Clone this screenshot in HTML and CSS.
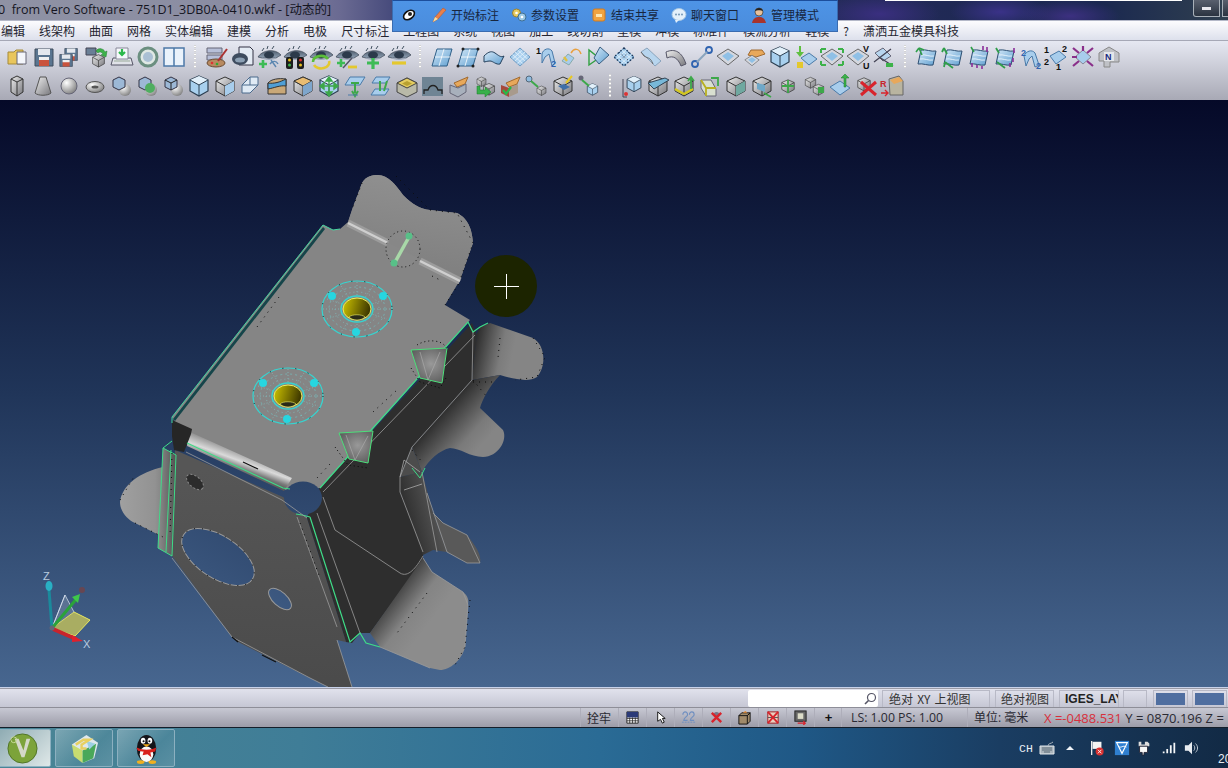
FILE: index.html
```html
<!DOCTYPE html>
<html lang="zh">
<head>
<meta charset="utf-8">
<title>Vero Software</title>
<link rel="stylesheet" href="styles.css">
</head>
<body>
<svg class="defs" width="0" height="0">
  <defs>
    <linearGradient id="gBlue" x1="0" y1="0" x2="1" y2="1"><stop offset="0" stop-color="#d4e8f8"/><stop offset="1" stop-color="#5f9fd0"/></linearGradient>
    <linearGradient id="gGrey" x1="0" y1="0" x2="1" y2="1"><stop offset="0" stop-color="#eeeeee"/><stop offset="1" stop-color="#77777c"/></linearGradient>
    <radialGradient id="gBall" cx=".35" cy=".3" r=".8"><stop offset="0" stop-color="#fff"/><stop offset="1" stop-color="#777"/></radialGradient>
    <linearGradient id="gEye" x1="0" y1="0" x2="0" y2="1"><stop offset="0" stop-color="#4f5d6e"/><stop offset="1" stop-color="#8fa0b4"/></linearGradient>
    <symbol id="folder" viewBox="0 0 26 26"><path d="M3 8h6l2-2h7v14H3z" fill="#e9c65c" stroke="#a58a3a"/><path d="M12 8h9v12h-9z" fill="#f4f6fb" stroke="#667"/></symbol>
    <symbol id="floppy" viewBox="0 0 26 26"><path d="M4 5h18v17H4z" fill="#5a7590" stroke="#3f4c5c"/><path d="M7 5h12v6H7z" fill="#e4e8ee"/><path d="M8 15h10v7H8z" fill="#c9533d"/><path d="M8 13h10v3H8z" fill="#f0f0f0"/></symbol>
    <symbol id="eye" viewBox="0 0 26 26"><path d="M2 13C6 6 19 4 25 11c-2 1-3 2-5 3H6z" fill="url(#gEye)" stroke="#3a4452" stroke-width=".7"/><path d="M6 7l2-3M11 5l1-3M16 5l2-3" stroke="#40505f"/><ellipse cx="13" cy="11" rx="5" ry="3.5" fill="#2c3a4b"/><path d="M6 14c4 2 10 2 14 0" stroke="#9caabc" fill="none"/></symbol>
    <symbol id="surf" viewBox="0 0 26 26"><path d="M8 5h15l-5 17H3z" fill="url(#gBlue)" stroke="#2f5f87"/><path d="M15 5l-5 17M6 13h15" stroke="#fff" stroke-width=".8"/></symbol>
    <symbol id="band" viewBox="0 0 26 26"><path d="M3 12C8 7 11 7 14 9s6 5 9 3l-4 8c-4 1-7-3-10-3s-5 1-6 1z" fill="url(#gBlue)" stroke="#24405c"/></symbol>
    <symbol id="mesh" viewBox="0 0 26 26"><path d="M13 4l10 9-10 9-10-9z" fill="#a9cfee" stroke="#6d9cc4"/><path d="M8 8l10 9M10.500 6l10 9M5.500 10.500l10 9M18 8l-10 9M15.500 6l-10 9M20.500 10.500l-10 9" stroke="#e6f2fb" stroke-width=".8"/></symbol>
    <symbol id="dia" viewBox="0 0 26 26"><path d="M13 5l11 7-11 9L2 12z" fill="#d4d7de" stroke="#666"/><path d="M13 8l6 4-6 5-6-5z" fill="#8fc0e6"/></symbol>
    <symbol id="cube" viewBox="0 0 26 26"><path d="M13 3l9 4v11l-9 5-9-5V7z" fill="#a8d0ee" stroke="#2b3e50" stroke-width="1.200"/><path d="M13 3l9 4-9 5-9-5z" fill="#e2f0fa"/><path d="M13 12v11M4 7l9 5 9-5" stroke="#2b3e50" fill="none"/></symbol>
    <symbol id="gcube" viewBox="0 0 26 26"><path d="M13 4l9 4v10l-9 5-9-5V8z" fill="url(#gGrey)" stroke="#333"/><path d="M4 8l9 5 9-5M13 13v10" stroke="#333" fill="none"/></symbol>
    <symbol id="book" viewBox="0 0 26 26"><path d="M7 6c5-1 10 2 15 1l-3 14c-5 1-10-2-15-1z" fill="url(#gBlue)" stroke="#2d4f72"/><path d="M7 11c4-1 9 2 13 1M6 15c4-1 9 2 13 1" stroke="#f4faff" stroke-width=".8" fill="none"/></symbol>
    <symbol id="ball" viewBox="0 0 26 26"><circle cx="17" cy="17" r="6" fill="url(#gBall)"/><path d="M5 7l6-3 6 3v7l-6 3-6-3z" fill="#9cb8d6" stroke="#334"/></symbol>
  </defs>
</svg>

<div class="app">
  <header class="titlebar">
    <span class="title">0&nbsp; from Vero Software - 751D1_3DB0A-0410.wkf - [动态的]</span>
    <span class="title-box"></span>
    <span class="winbtn"><i></i></span>
    <span class="winbtn winbtn-next"></span>
  </header>

  <nav class="menu">
    <span>编辑</span><span>线架构</span><span>曲面</span><span>网格</span><span>实体编辑</span><span>建模</span><span>分析</span><span>电极</span><span>尺寸标注</span><span>工程图</span><span>系统</span><span>视图</span><span>加工</span><span>线切割</span><span>型模</span><span>冲模</span><span>标准件</span><span>模流分析</span><span>鞋模</span><span>?</span><span>潇洒五金模具科技</span>
  </nav>

  <div class="share">
    <svg class="sh-ic first" viewBox="0 0 18 18"><ellipse cx="9" cy="9" rx="6" ry="4" transform="rotate(-35 9 9)" fill="#fff" stroke="#111" stroke-width="1.600"/><circle cx="10" cy="8" r="2" fill="#222"/></svg>
    <svg class="sh-ic" viewBox="0 0 18 18"><path d="M3 16l2-5 8-9 3 2-8 9z" fill="#e8804a" stroke="#b85a30" stroke-width=".6"/><path d="M3 16l2-5 3 2z" fill="#f5e0a0"/></svg><span>开始标注</span>
    <svg class="sh-ic" viewBox="0 0 18 18"><circle cx="6.500" cy="7" r="4" fill="#e8cc60" stroke="#998030"/><circle cx="12" cy="11" r="4" fill="#9cc8e4" stroke="#3f6f95"/><circle cx="6.500" cy="7" r="1.300" fill="#fff"/><circle cx="12" cy="11" r="1.300" fill="#fff"/></svg><span>参数设置</span>
    <svg class="sh-ic" viewBox="0 0 18 18"><rect x="3" y="3" width="12" height="12" rx="2" fill="#f0a340" stroke="#d07a20"/><path d="M6 8h6v3H6z" fill="#fde6b0"/></svg><span>结束共享</span>
    <svg class="sh-ic" viewBox="0 0 18 18"><ellipse cx="9" cy="8.500" rx="7" ry="6" fill="#e4f0fa" stroke="#a8c8e4"/><path d="M5 14l1 3 3-3z" fill="#e4f0fa"/><circle cx="6" cy="8.500" r=".9" fill="#6a8fb0"/><circle cx="9" cy="8.500" r=".9" fill="#6a8fb0"/><circle cx="12" cy="8.500" r=".9" fill="#6a8fb0"/></svg><span>聊天窗口</span>
    <svg class="sh-ic" viewBox="0 0 18 18"><circle cx="9" cy="6" r="4" fill="#e8c09a" stroke="#222" stroke-width=".6"/><path d="M5 5c1-4 7-4 8 0-2-1-6-1-8 0z" fill="#222"/><path d="M2 17c1-5 4-6 7-6s6 1 7 6z" fill="#a8342c"/></svg><span>管理模式</span>
  </div>

  <div class="toolbars">
    <div class="tbrow row-a">
      <svg class="ic"><use href="#folder"/></svg>
      <svg class="ic"><use href="#floppy"/></svg>
      <svg class="ic" viewBox="0 0 26 26"><g transform="translate(5 1) scale(.7)"><use href="#floppy" width="26" height="26"/></g><g transform="translate(0 7) scale(.7)"><use href="#floppy" width="26" height="26"/></g></svg>
      <svg class="ic" viewBox="0 0 26 26"><path d="M3 4h10v7H3z" fill="#6a7f96" stroke="#445"/><use href="#gcube" x="7" y="8" width="17" height="17"/><path d="M13 7a5 5 0 0 1 9 1l2-1-1 6-5-2 2-1a3 3 0 0 0-5-1z" fill="#3db24a" stroke="#1f7a2c" stroke-width=".5"/></svg>
      <svg class="ic" viewBox="0 0 26 26"><path d="M4 14h18l2 7H2z" fill="#e0e2e8" stroke="#556"/><path d="M7 4h12v11H7z" fill="#f6f8fc" stroke="#889"/><path d="M13 5v6M10 8l3 3 3-3" stroke="#2cb84c" stroke-width="2.200" fill="none"/><path d="M5 17h16" stroke="#9a9"/></svg>
      <svg class="ic" viewBox="0 0 26 26"><circle cx="13" cy="13" r="9" fill="#dfe8e4" stroke="#6b8f80" stroke-width="3"/><circle cx="13" cy="13" r="5" fill="#aac0d4"/></svg>
      <svg class="ic" viewBox="0 0 26 26"><rect x="3" y="4" width="20" height="18" fill="#eaf2fb" stroke="#4d78a8" stroke-width="1.500"/><path d="M13 4v18" stroke="#4d78a8" stroke-width="1.500"/></svg>
      <i class="sep"></i>
      <svg class="ic" viewBox="0 0 26 26"><path d="M3 4h15v5H3zM3 11h15v5H3z" fill="#b7bfd8" stroke="#667"/><ellipse cx="12" cy="19" rx="9" ry="4" fill="#b88a60" stroke="#6a4a30"/><circle cx="8" cy="19" r="1.300" fill="#d33"/><circle cx="13" cy="20" r="1.300" fill="#3a3"/><path d="M14 17l9-12" stroke="#a33" stroke-width="2"/></svg>
      <svg class="ic" viewBox="0 0 26 26"><path d="M9 3h11l3 3v15H9z" fill="#e4ebf4" stroke="#334"/><ellipse cx="10" cy="15" rx="8" ry="6" fill="#3e4c5f"/><ellipse cx="10" cy="16" rx="5" ry="2.500" fill="#8ca0b4"/></svg>
      <svg class="ic" viewBox="0 0 26 26"><use href="#eye"/><path d="M3 20h8M7 16v8" stroke="#3dbb55" stroke-width="2.600"/><path d="M15 16l5 7M14 20c2-3 6-4 8 0" stroke="#5a86b0" stroke-width="1.400" fill="none"/></svg>
      <svg class="ic" viewBox="0 0 26 26"><use href="#eye"/><rect x="4" y="13" width="7" height="12" rx="2" fill="#1c1c1c"/><rect x="15" y="13" width="7" height="12" rx="2" fill="#1c1c1c"/><circle cx="7.500" cy="16" r="1.500" fill="#e8c020"/><circle cx="7.500" cy="21" r="1.500" fill="#3db24a"/><circle cx="18.500" cy="16" r="1.500" fill="#d83030"/><circle cx="18.500" cy="21" r="1.500" fill="#e8c020"/></svg>
      <svg class="ic" viewBox="0 0 26 26"><use href="#eye"/><path d="M5 18a8 6 0 0 1 15-3" stroke="#5bbd3a" stroke-width="2.600" fill="none"/><path d="M21 17a8 6 0 0 1-15 4" stroke="#e4c82e" stroke-width="2.600" fill="none"/></svg>
      <svg class="ic" viewBox="0 0 26 26"><use href="#eye"/><path d="M3 19h8M7 15v8" stroke="#3dbb55" stroke-width="2.600"/><path d="M9 24l9-10" stroke="#556" stroke-width="1.500"/><path d="M14 23h9" stroke="#e4c82e" stroke-width="2.800"/></svg>
      <svg class="ic" viewBox="0 0 26 26"><use href="#eye"/><path d="M7 19h12M13 14v11" stroke="#3dbb55" stroke-width="3.200"/></svg>
      <svg class="ic" viewBox="0 0 26 26"><use href="#eye"/><path d="M6 19h14" stroke="#e4c82e" stroke-width="3.200"/></svg>
      <i class="sep"></i>
      <svg class="ic"><use href="#surf"/></svg>
      <svg class="ic" viewBox="0 0 26 26"><use href="#surf"/><circle cx="8" cy="5" r="1.500" fill="#222"/><circle cx="23" cy="5" r="1.500" fill="#222"/><circle cx="3" cy="22" r="1.500" fill="#222"/><circle cx="18" cy="22" r="1.500" fill="#222"/></svg>
      <svg class="ic"><use href="#band"/></svg>
      <svg class="ic"><use href="#mesh"/></svg>
      <svg class="ic" viewBox="0 0 26 26"><path d="M9 10c1-5 7-7 10-3l3 12-3 3-3-12-4 3-3 6z" fill="#a8cdec" stroke="#4a7aa8"/><text class="ictxt" x="3" y="10">1</text><text class="ictxt blue" x="18" y="23">2</text></svg>
      <svg class="ic" viewBox="0 0 26 26"><path d="M3 17l6-7 6 4-5 7z" fill="#a8cdec" stroke="#8aa"/><path d="M12 9c3-5 8-5 10 1" stroke="#e8a040" stroke-width="1.500" fill="none"/><path d="M5 13l3 4" stroke="#e0c040" stroke-width="2.400"/></svg>
      <svg class="ic" viewBox="0 0 26 26"><path d="M4 6v15l10-7z" fill="none" stroke="#30a040" stroke-width="1.400"/><path d="M15 3l9 8-10 9-5-6z" fill="url(#gBlue)" stroke="#3a5f82"/></svg>
      <svg class="ic" viewBox="0 0 26 26"><use href="#mesh"/><path d="M13 4l10 9-10 9-10-9z" fill="none" stroke="#1f3a5c" stroke-dasharray="1.500 2" stroke-width="1.400"/><path d="M8 8l10 9M18 8l-10 9" stroke="#1f3a5c" stroke-dasharray="1.500 2"/></svg>
      <svg class="ic" viewBox="0 0 26 26"><path d="M4 8l6-4 14 13-6 5z" fill="#b7d5ee" stroke="#8aa4bd"/><path d="M4 8l3 4c5 3 6 1 9 8" stroke="#666" fill="none"/></svg>
      <svg class="ic" viewBox="0 0 26 26"><path d="M3 8c9-4 16 0 20 12l-5 2C15 14 10 11 4 14z" fill="url(#gGrey)" stroke="#556"/></svg>
      <svg class="ic" viewBox="0 0 26 26"><circle cx="6" cy="20" r="3" fill="none" stroke="#2f63b0" stroke-width="1.800"/><circle cx="20" cy="6" r="3" fill="none" stroke="#2f63b0" stroke-width="1.800"/><path d="M8 18L18 8" stroke="#8aa4bd" stroke-width="2"/></svg>
      <svg class="ic"><use href="#dia"/></svg>
      <svg class="ic" viewBox="0 0 26 26"><path d="M10 6h11l3 4-9 3-8-2z" fill="#e8a85a" stroke="#a06a30"/><use href="#dia" x="1" y="8" width="20" height="17"/></svg>
      <svg class="ic"><use href="#cube"/></svg>
      <svg class="ic" viewBox="0 0 26 26"><path d="M8 14l8-5 8 6-8 6z" fill="#a8cdec" stroke="#4a7aa8"/><path d="M6 2v6H3l4 5 4-5H8V2z" fill="#5fbf40"/><path d="M4 18h6v6H4z" fill="#e4c82e"/></svg>
      <svg class="ic" viewBox="0 0 26 26"><use href="#dia"/><path d="M2 5h5M2 5v4M24 5h-5M24 5v4M2 21h5M2 21v-4M24 21h-5M24 21v-4" stroke="#3db24a" stroke-width="2"/></svg>
      <svg class="ic" viewBox="0 0 26 26"><use href="#dia"/><text class="ictxt" x="18" y="8">V</text><text class="ictxt" x="18" y="25">U</text></svg>
      <svg class="ic" viewBox="0 0 26 26"><path d="M4 9l8-5 8 8-8 5z" fill="#b7d5ee" stroke="#667"/><path d="M3 18L20 5M8 13l14 9" stroke="#445" stroke-width="1.300"/><path d="M15 19h7v4h-7z" fill="#3db24a"/></svg>
      <i class="sep"></i>
      <svg class="ic" viewBox="0 0 26 26"><use href="#book"/><path d="M8 11L5 4M5 4L2 8M5 4l5 2" stroke="#2f9e4a" stroke-width="1.600" fill="none"/></svg>
      <svg class="ic" viewBox="0 0 26 26"><use href="#book"/><path d="M7 10L4 4M4 4L2 8M5 18l8 6M5 18l-1 5" stroke="#2f9e4a" stroke-width="1.800" fill="none"/></svg>
      <svg class="ic" viewBox="0 0 26 26"><use href="#book"/><path d="M8 8L5 3" stroke="#2f9e4a" stroke-width="1.600"/><path d="M6 19v4M11 21v3M16 22v3M21 8V3M17 6V2" stroke="#8a2f9a" stroke-width="1.600"/></svg>
      <svg class="ic" viewBox="0 0 26 26"><use href="#book"/><path d="M7 9L4 4M5 18l8 6" stroke="#2f9e4a" stroke-width="1.800"/><path d="M22 4v5M21 14v4M18 19v4" stroke="#8a2f9a" stroke-width="1.600"/></svg>
      <svg class="ic" viewBox="0 0 26 26"><path d="M6 12c2-5 8-7 11-3l4 12-4 2-3-11-3 3-3 7z" fill="#a8cdec" stroke="#4a7aa8"/><text class="ictxt blue" x="3" y="12">2</text><text class="ictxt blue" x="18" y="25">2</text></svg>
      <svg class="ic" viewBox="0 0 26 26"><path d="M6 12l9-5 7 6-10 7z" fill="#a8cdec" stroke="#4a7aa8"/><text class="ictxt" x="0" y="9">1</text><text class="ictxt" x="18" y="8">2</text><text class="ictxt" x="0" y="21">2</text><text class="ictxt" x="12" y="26">1</text></svg>
      <svg class="ic" viewBox="0 0 26 26"><path d="M13 6l8 7-8 7-8-7z" fill="#a8cdec" stroke="#889"/><path d="M3 4l6 5M23 4l-6 5M3 22l6-5M23 22l-6-5M13 2v5M2 13h5" stroke="#8a2f8a" stroke-width="2.200"/></svg>
      <svg class="ic" viewBox="0 0 26 26"><path d="M3 9l10-6 10 6v9H14v5H8v-6H3z" fill="#bfc1c6" stroke="#888"/><path d="M8 8h10v9H8z" fill="#e4e6ea"/><text class="ictxt navy" x="9" y="16">N</text></svg>
    </div>
    <div class="tbrow row-b">
      <svg class="ic" viewBox="0 0 26 26"><path d="M7 6l6-3 6 3v13l-6 4-6-4z" fill="url(#gGrey)" stroke="#333"/><path d="M7 6l6 3 6-3M13 9v14" stroke="#333" fill="none"/></svg>
      <svg class="ic" viewBox="0 0 26 26"><path d="M10 4h6l5 16c-3 3-13 3-16 0z" fill="url(#gGrey)" stroke="#555"/></svg>
      <svg class="ic" viewBox="0 0 26 26"><circle cx="13" cy="13" r="8" fill="url(#gBall)" stroke="#667"/></svg>
      <svg class="ic" viewBox="0 0 26 26"><ellipse cx="13" cy="14" rx="9" ry="5.500" fill="url(#gBall)" stroke="#555"/><ellipse cx="13" cy="14" rx="3.500" ry="1.500" fill="#555"/></svg>
      <svg class="ic"><use href="#ball"/></svg>
      <svg class="ic" viewBox="0 0 26 26"><use href="#ball"/><circle cx="16" cy="15" r="5" fill="#4fae60"/></svg>
      <svg class="ic" viewBox="0 0 26 26"><use href="#ball"/><path d="M5 7l6 3 6-3M11 10v7" stroke="#222" fill="none"/></svg>
      <svg class="ic"><use href="#cube"/></svg>
      <svg class="ic" viewBox="0 0 26 26"><use href="#gcube"/><path d="M13 13l9-5v10l-9 5z" fill="#a8cdec"/></svg>
      <svg class="ic" viewBox="0 0 26 26"><path d="M4 20V12l8-8h8v8l-8 8z" fill="#dfeaf5" stroke="#4a6a8c"/><path d="M12 4v8l8 0M4 12h8" stroke="#4a6a8c" fill="none"/></svg>
      <svg class="ic" viewBox="0 0 26 26"><path d="M4 10c3-4 11-5 18-4v15H4z" fill="#c9a878" stroke="#333"/><path d="M4 10c6 1 12-1 18-4v7c-6-1-12 2-18 3z" fill="#4f9fd6" stroke="#333"/></svg>
      <svg class="ic" viewBox="0 0 26 26"><use href="#gcube"/><path d="M4 8l9-4 9 4-9 5z" fill="#e8bc72" stroke="#333"/><path d="M13 13v10l9-5V8z" fill="#7ea6cc"/></svg>
      <svg class="ic" viewBox="0 0 26 26"><use href="#cube"/><path d="M13 6v15M6 13h14M13 4l-3 4h6zM13 23l-3-4h6zM4 13l4-3v6zM22 13l-4-3v6z" stroke="#3da84a" fill="#3da84a" stroke-width="1.400"/></svg>
      <svg class="ic" viewBox="0 0 26 26"><path d="M8 4h15l-5 8H3z" fill="#a8cdec" stroke="#4a7aa8"/><path d="M13 10v10M10 18l3 5 3-5M9 10h8" stroke="#3da84a" stroke-width="2" fill="none"/><path d="M6 22h10" stroke="#4a7aa8"/></svg>
      <svg class="ic" viewBox="0 0 26 26"><path d="M8 4h14l-4 6H4zM7 16h14l-4 6H3z" fill="#a8cdec" stroke="#4a7aa8"/><path d="M12 8v10M19 8l-3 10" stroke="#3da84a" stroke-width="2"/></svg>
      <svg class="ic" viewBox="0 0 26 26"><path d="M13 5l10 5v9l-10 5-10-5v-9z" fill="#b9b9a8" stroke="#444"/><path d="M13 5l10 5-10 5-10-5z" fill="#e4cc60" stroke="#444"/><path d="M13 8l5 2.500-5 2.500-5-2.500z" fill="#b8a030"/></svg>
      <svg class="ic" viewBox="0 0 26 26"><rect x="2" y="4" width="21" height="19" fill="#6f8494"/><path d="M4 21v-4h4c2-6 8-6 10 0h4v4" stroke="#222" fill="none" stroke-width="1.300"/></svg>
      <svg class="ic" viewBox="0 0 26 26"><path d="M8 10l14-6-3 7-8 3z" fill="#e8a85a" stroke="#a06a30"/><path d="M4 12l8 3 8-4v8l-8 5-8-4z" fill="#a8b0bc" stroke="#667"/></svg>
      <svg class="ic" viewBox="0 0 26 26"><use href="#gcube" x="9" y="8" width="16" height="16"/><use href="#gcube" x="3" y="2" width="13" height="13"/><path d="M5 13v8h8v3l6-5-6-5v3H8v-4z" fill="#38b04a" stroke="#1d7a2c" stroke-width=".5"/></svg>
      <svg class="ic" viewBox="0 0 26 26"><path d="M3 12l8 3v9l-8-4z" fill="#a8483c"/><path d="M11 15l9-4v9l-9 4z" fill="#a89a8c"/><path d="M8 10l14-6-3 7-8 3z" fill="#e8a85a" stroke="#a06a30"/><path d="M5 17l3 4 5-7" stroke="#28b848" stroke-width="2.200" fill="none"/></svg>
      <svg class="ic" viewBox="0 0 26 26"><use href="#gcube" x="11" y="11" width="13" height="13"/><circle cx="5" cy="6" r="3" fill="#8fbce0" stroke="#567"/><path d="M7 8l7 6" stroke="#3da84a" stroke-width="2"/></svg>
      <svg class="ic" viewBox="0 0 26 26"><use href="#gcube"/><path d="M8 13l6-2 6 3-6 3z" fill="#3f6fa8"/><path d="M16 10l6-7" stroke="#e8c820" stroke-width="2"/></svg>
      <svg class="ic" viewBox="0 0 26 26"><use href="#cube" x="9" y="9" width="15" height="15"/><circle cx="5" cy="5" r="2.500" fill="#667"/><path d="M6 7l7 6" stroke="#3da84a" stroke-width="2"/></svg>
      <i class="sep"></i>
      <svg class="ic" viewBox="0 0 26 26"><use href="#cube" x="5" y="1" width="20" height="20"/><path d="M4 6v18h4" stroke="#445" fill="none"/><circle cx="7" cy="21" r="2" fill="#d33"/></svg>
      <svg class="ic" viewBox="0 0 26 26"><use href="#gcube"/><path d="M3 10l17-5 4 2-15 9z" fill="#78b8d8" stroke="#345"/></svg>
      <svg class="ic" viewBox="0 0 26 26"><use href="#gcube"/><path d="M4 16l9 5 9-5" stroke="#d4c820" stroke-width="2.400" fill="none"/><path d="M20 16V5M17 8l3-4 3 4" stroke="#3da84a" stroke-width="1.800" fill="none"/></svg>
      <svg class="ic" viewBox="0 0 26 26"><path d="M4 7h10l5 9v7H9l-5-8z" fill="#d8dfd0" stroke="#667"/><path d="M4 7l5 8h10M9 15v8" stroke="#b8b020" stroke-width="1.800" fill="none"/><path d="M14 5h7v8" stroke="#3da84a" stroke-width="1.800" fill="none"/></svg>
      <svg class="ic" viewBox="0 0 26 26"><use href="#gcube"/><path d="M13 13l9-5v10l-9 5z" fill="#6fa8a0"/></svg>
      <svg class="ic" viewBox="0 0 26 26"><use href="#gcube"/><path d="M8 10l8 2v7l-8-3z" fill="#6fa8c8"/><path d="M15 20l7 4" stroke="#3da84a" stroke-width="1.800"/></svg>
      <svg class="ic" viewBox="0 0 26 26"><use href="#gcube" x="4" y="4" width="18" height="18"/><path d="M13 7v13M7 13h12" stroke="#3da84a" stroke-width="1.800"/></svg>
      <svg class="ic" viewBox="0 0 26 26"><use href="#gcube" x="2" y="2" width="15" height="15"/><use href="#gcube" x="10" y="9" width="15" height="15"/><path d="M17 14h6v6h-6z" fill="#3da84a"/></svg>
      <svg class="ic" viewBox="0 0 26 26"><path d="M3 14l10-6 10 7-10 7z" fill="#a8cdec" stroke="#4a7aa8"/><path d="M17 14V5h-3l4-4 4 4h-3v9z" fill="#3db24a" stroke="#1d7a2c" stroke-width=".5"/></svg>
      <svg class="ic" viewBox="0 0 26 26"><use href="#gcube" x="1" y="2" width="20" height="18"/><path d="M8 9l15 13M23 9L8 22" stroke="#d8242c" stroke-width="3"/></svg>
      <svg class="ic" viewBox="0 0 26 26"><path d="M10 6l10-3 4 5v14H11z" fill="#b9b4a0" stroke="#666"/><path d="M11 7l9-3 4 4-9 3z" fill="#e8a85a"/><text class="ictxt red" x="1" y="14">R</text><path d="M2 20h7M6 17l3 3-3 3" stroke="#d8242c" stroke-width="1.400" fill="none"/></svg>
    </div>
  </div>

  <main class="viewport">
    <svg class="scene" viewBox="0 100 1228 587" preserveAspectRatio="none">
      <defs>
        <linearGradient id="bg" gradientUnits="userSpaceOnUse" x1="0" y1="100" x2="0" y2="687"><stop offset="0" stop-color="#050928"/><stop offset=".5" stop-color="#203559"/><stop offset="1" stop-color="#47668f"/></linearGradient>
        <linearGradient id="lTab" gradientUnits="userSpaceOnUse" x1="120" y1="500" x2="170" y2="500"><stop offset="0" stop-color="#a0a0a0"/><stop offset=".7" stop-color="#929292"/><stop offset="1" stop-color="#777"/></linearGradient>
        <linearGradient id="lStrip" gradientUnits="userSpaceOnUse" x1="160" y1="500" x2="175" y2="500"><stop offset="0" stop-color="#868686"/><stop offset="1" stop-color="#555"/></linearGradient>
        <linearGradient id="upTab" gradientUnits="userSpaceOnUse" x1="474" y1="350" x2="512" y2="358"><stop offset="0" stop-color="#2e2e2e"/><stop offset=".7" stop-color="#7c7c7c"/><stop offset="1" stop-color="#858585"/></linearGradient>
        <linearGradient id="upTab2" gradientUnits="userSpaceOnUse" x1="442" y1="413" x2="480" y2="447"><stop offset="0" stop-color="#2e2e2e"/><stop offset=".7" stop-color="#7a7a7a"/><stop offset="1" stop-color="#858585"/></linearGradient>
        <linearGradient id="botTab" gradientUnits="userSpaceOnUse" x1="388" y1="590" x2="430" y2="622"><stop offset="0" stop-color="#2e2e2e"/><stop offset=".6" stop-color="#848484"/><stop offset="1" stop-color="#8c8c8c"/></linearGradient>
        <linearGradient id="strip" gradientUnits="userSpaceOnUse" x1="402" y1="505" x2="440" y2="495"><stop offset="0" stop-color="#2e2e2e"/><stop offset="1" stop-color="#5c5c5c"/></linearGradient>
        <linearGradient id="bend" gradientUnits="userSpaceOnUse" x1="244" y1="450" x2="236" y2="472"><stop offset="0" stop-color="#858585"/><stop offset=".5" stop-color="#dadada"/><stop offset=".8" stop-color="#7a7a7a"/><stop offset="1" stop-color="#5a5a5a"/></linearGradient>
        <linearGradient id="topTab" gradientUnits="userSpaceOnUse" x1="410" y1="180" x2="395" y2="270"><stop offset="0" stop-color="#8f8f8f"/><stop offset="1" stop-color="#7f7f7f"/></linearGradient>
        <linearGradient id="front" gradientUnits="userSpaceOnUse" x1="240" y1="470" x2="240" y2="680"><stop offset="0" stop-color="#565656"/><stop offset="1" stop-color="#4b4b4b"/></linearGradient>
        <linearGradient id="yel" x1="0" y1="0" x2="1" y2=".2"><stop offset="0" stop-color="#cfc400"/><stop offset="1" stop-color="#403a00"/></linearGradient>
        <radialGradient id="dim" cx=".55" cy=".45" r=".6"><stop offset="0" stop-color="#999"/><stop offset="1" stop-color="#5f5f5f"/></radialGradient>
        <g id="flange">
          <ellipse rx="35" ry="28" fill="#858585" stroke="#37d4d0" stroke-width="1.200"/>
          <ellipse rx="35" ry="28" fill="none" stroke="#111" stroke-dasharray="1 12"/>
          <ellipse rx="28" ry="22" fill="none" stroke="#6ad6d6" stroke-width=".5" stroke-dasharray="2 3"/>
          <ellipse rx="22" ry="17" fill="none" stroke="#7fdcdc" stroke-width=".5" stroke-dasharray="1 3"/>
          <path d="M-30-10L30 10M-30 10L30-10M0-27V27M-16-23L16 23M16-23L-16 23M-34 0H34" stroke="#7fdcdc" stroke-width=".5" stroke-dasharray="1 2"/>
          <ellipse rx="16" ry="13" fill="#858585" stroke="#37d4d0" stroke-width="1.400"/>
          <ellipse rx="14" ry="11" fill="url(#yel)" stroke="#e8f060"/>
          <path d="M-8 8c3-3 13-3 16 0-4 4-12 4-16 0z" fill="#2a2a18" stroke="#f0f070" stroke-width=".6"/>
          <circle cx="-25" cy="-13" r="4" fill="#26d6e0"/>
          <circle cx="26" cy="-13" r="4" fill="#26d6e0"/>
          <circle cx="-1" cy="23" r="4" fill="#26d6e0"/>
        </g>
      </defs>
      <rect x="0" y="100" width="1228" height="587" fill="url(#bg)"/>

      <!-- left tab and strip -->
      <path d="M163 467C140 472 122 485 120 502C120 512 128 520 135 523L163 537Z" fill="url(#lTab)"/>
      <path d="M163 448L176 455L172 556L158 548Z" fill="url(#lStrip)"/>

      <!-- front face -->
      <path d="M175 450L283 497L307 518L346 642L337 640L352 687L328 687L238 642L232 637L172 556Z" fill="url(#front)"/>
      <ellipse cx="218" cy="557" rx="41" ry="21" transform="rotate(33 218 557)" fill="url(#bg)" stroke="#9a9a9a"/>
      <ellipse cx="218" cy="557" rx="41" ry="21" transform="rotate(33 218 557)" fill="none" stroke="#111" stroke-dasharray="1 7"/>
      <ellipse cx="280" cy="599" rx="14" ry="7" transform="rotate(42 280 599)" fill="url(#bg)" stroke="#999"/>
      <ellipse cx="195" cy="482" rx="10" ry="5.500" transform="rotate(40 195 482)" fill="#2c2c2c" stroke="#888" stroke-dasharray="2 2"/>

      <!-- dark side -->
      <path d="M316 492L472 323L477 335L472 380L412 447L400 477L400 492L423 552L423 560L370 633L360 633L352 643L346 642L307 518Z" fill="#2e2e2e"/>

      <!-- right tabs -->
      <path d="M477 333L480 327L490 323L533 338C545 345 547 365 537 377C530 382 515 380 500 375L472 380Z" fill="url(#upTab)"/>
      <path d="M472 380L500 375C490 385 482 400 480 408L503 430C508 440 498 457 483 457C470 457 460 448 450 448C440 450 428 460 422 472L412 447Z" fill="url(#upTab2)"/>
      <path d="M412 447L422 472L400 477Z" fill="#4c4c4c"/>
      <path d="M400 477L422 472L433 513L447 552L433 550L423 555L400 492Z" fill="url(#strip)"/>
      <path d="M433 513L443 523L467 535C475 545 482 555 480 563L467 563L447 552Z" fill="#595959"/>
      <path d="M423 558L432 572L463 592C468 596 469 600 468 605L465 647C462 660 450 670 440 670L430 668L380 647L370 633Z" fill="url(#botTab)"/>

      <!-- top face with tab -->
      <path d="M323 225L333 230L340 229L348 222L353 207L362 183C366 176 372 175 378 175C388 175 396 185 403 195C412 204 420 209 430 210L457 213C465 217 472 225 473 243L460 280L445 305L470 320L345 460L320 488L283 490L187 445L172 417Z" fill="#858585"/>
      <path d="M348 222L353 207L362 183C366 176 372 175 378 175C388 175 396 185 403 195C412 204 420 209 430 210L457 213C465 217 472 225 473 243L460 280Z" fill="url(#topTab)"/>
      <path d="M190 432L292 478L284 491L187 446Z" fill="url(#bend)"/>
      <path d="M348 223L388 243M420 261L460 281" stroke="#9c9c9c" stroke-width="7"/>
      <path d="M348 223L388 243M420 261L460 281" stroke="#cfcfcf" stroke-width="2.500"/>

      <!-- hole in bend -->
      <ellipse cx="303" cy="498" rx="19" ry="16.500" fill="url(#bg)"/>

      <!-- black corner -->
      <path d="M172 420L192 429L191 434L184 452L174 450L172 436Z" fill="#262626"/>

      <!-- edges -->
      <path d="M323 227L173 419L175 421L325 229Z" fill="#15454a"/>
      <path d="M323 225L172 417L172 423M323 225L333 230L340 229" stroke="#45d6a0" fill="none"/>
      <path d="M163 448L172 441M163 448L176 455L172 556L158 548L163 448M171 450L166 552" stroke="#3fdc88" fill="none"/>
      <path d="M187 443L283 488L290 489" stroke="#3fdc88" fill="none" stroke-width="1.200"/>
      <path d="M320 488L345 460L373 428L468 322L473 332L480 327L488 323M310 517L350 642L360 633L366 643L380 647M310 517L302 515L296 514" stroke="#3fdc88" fill="none" stroke-width="1.200"/>
      <path d="M323 497L335 530L400 573C408 578 416 568 423 556M317 513L360 633M473 332L472 380L412 447L400 477L400 492L423 552M422 472L437 552M323 492L475 335M186 452L282 500L307 518M172 558L232 637L310 678L328 687M337 640L352 687M427 493L447 552L467 563L480 563M433 513L443 523L467 535L480 563M423 558L432 572L463 592L468 605L465 647M430 668L380 647M297 517L337 627" stroke="#9c9c9c" fill="none" stroke-width=".8"/>
      <path d="M420 472L404 460L400 477M404 490L422 484" stroke="#b8b8b8" stroke-width=".7" fill="none"/>
      <path d="M412 468L420 478L425 468" stroke="#3fdc88" fill="none"/>

      <!-- dotted sharp edges -->
      <path d="M257 327L279 297M396 176L430 210L457 213L473 243L460 280M362 183L353 207M373 412L397 390M432 276L442 281M533 338L545 357L537 377L515 380M500 338L498 358M473 380L487 397M473 382L492 382M317 478L330 464M300 523L320 578M427 593L397 633M470 600L465 647L455 665M412 450L423 463M445 305L460 282M172 453L170 537M135 523L163 537M120 500L135 475" stroke="#0a0a0a" fill="none" stroke-dasharray="1 5"/>
      <path d="M243 462L258 469M262 655L276 662M232 637L238 642" stroke="#111" stroke-width="1.200"/>
      <ellipse cx="403" cy="249" rx="17" ry="18" fill="#8a8a8a" opacity=".55"/>
      <ellipse cx="403" cy="249" rx="17" ry="18" fill="none" stroke="#111" stroke-dasharray="1 3"/>
      <path d="M394 264L409 237" stroke="#a8d8a8" stroke-width="3.500"/>
      <circle cx="409" cy="236" r="3.500" fill="#58c088"/>
      <circle cx="394" cy="263" r="3.500" fill="#58c088"/>

      <!-- flanges -->
      <use href="#flange" x="357" y="309"/>
      <use href="#flange" x="288" y="396"/>

      <!-- dimples -->
      <path d="M411 350L447 348L442 383L420 378Z" fill="url(#dim)" stroke="#4ce07a"/>
      <path d="M420 352L428 380L440 352" stroke="#b0b0b0" stroke-width=".6" fill="none"/>
      <path d="M417 345C428 338 445 340 447 350M411 368L420 382L440 388L446 378" stroke="#0a0a0a" stroke-dasharray="1 3" fill="none"/>
      <path d="M339 433L373 431L368 463L349 459Z" fill="url(#dim)" stroke="#4ce07a"/>
      <path d="M346 435L355 460L368 436" stroke="#b0b0b0" stroke-width=".6" fill="none"/>
      <path d="M335 447L348 465L368 468" stroke="#0a0a0a" stroke-dasharray="1 3" fill="none"/>

      <!-- cursor -->
      <circle cx="506" cy="286" r="31" fill="#1c2400"/>
      <path d="M494 286.500H519M506.500 274V299" stroke="#fff" stroke-width="1"/>

      <!-- triad -->
      <path d="M52 628L74 612L90 620L75 636Z" fill="#a9ad62" stroke="#e8e860"/>
      <path d="M52 628L65 595L74 612M65 595L52 628" fill="#8a9ab0" fill-opacity=".4" stroke="#dfe8f4" stroke-width=".7"/>
      <path d="M52 628L49 590" stroke="#1b8a9c" stroke-width="3"/>
      <ellipse cx="49" cy="586" rx="3.500" ry="5" fill="#29b0c4"/>
      <path d="M53 627L78 597" stroke="#2aa33a" stroke-width="3"/>
      <path d="M72 597L80 594L78 603Z" fill="#3ec84a"/>
      <path d="M53 629L76 639" stroke="#c8242c" stroke-width="4"/>
      <path d="M72 635L83 641L72 642Z" fill="#e0202c"/>
      <circle cx="82" cy="590" r="3" fill="#7a4040" opacity=".7"/>
      <circle cx="52" cy="628" r="2.500" fill="#667"/>
      <text class="axis" x="43" y="580">Z</text>
      <text class="axis" x="83" y="648">X</text>
    </svg>
  </main>

  <div class="status-a">
    <div class="search"><svg class="mag" viewBox="0 0 14 14"><circle cx="8.500" cy="5.500" r="4" fill="#fff" stroke="#556" stroke-width="1.200"/><path d="M5.500 8.500L2 12" stroke="#556" stroke-width="1.600"/></svg></div>
    <div class="sbtn v1">绝对 XY 上视图</div>
    <div class="sbtn v2">绝对视图</div>
    <div class="sbtn v3">IGES_LAY</div>
    <div class="sbtn v4"></div>
    <div class="sbtn v5"><i></i></div>
    <div class="sbtn v6"><i></i></div>
  </div>

  <div class="status-b">
    <div class="cell c-text">拴牢</div>
    <div class="cell c-ic"><svg class="si" viewBox="0 0 16 16"><path d="M2 2h12v12H2z" fill="#fff" stroke="#222"/><path d="M2 2h12v6H2z" fill="#2b3a78"/><path d="M2 9h12M2 11.500h12M5 8v6M8 8v6M11 8v6" stroke="#222" stroke-width=".8"/></svg></div>
    <div class="cell c-ic"><svg class="si" viewBox="0 0 16 16"><path d="M5 2v10l3-2 2 4 2-1-2-4h3z" fill="#fff" stroke="#111"/></svg></div>
    <div class="cell c-ic"><svg class="si" viewBox="0 0 16 16"><path d="M2 5c0-4 5-4 5 0 0 2-4 3-4 6h4M9 5c0-4 5-4 5 0 0 2-4 3-4 6h4" stroke="#6f8fc0" fill="none" stroke-width="1.200"/><path d="M1 13h14" stroke="#6f8fc0" stroke-dasharray="2 1"/></svg></div>
    <div class="cell c-ic"><svg class="si" viewBox="0 0 16 16"><circle cx="8" cy="5" r="3" fill="#778"/><path d="M3 3l10 10M13 3L3 13" stroke="#d8242c" stroke-width="2.600"/></svg></div>
    <div class="cell c-ic"><svg class="si" viewBox="0 0 16 16"><path d="M2 6h9v9H2zM2 6l3-3h9l-3 3M11 6l3-3v9l-3 3" fill="#a08a6a" stroke="#111"/><path d="M6 3l3-2 2 2z" fill="#e8882c"/></svg></div>
    <div class="cell c-ic"><svg class="si" viewBox="0 0 16 16"><rect x="3" y="2" width="11" height="12" fill="#e8d0c0" stroke="#a01c20"/><path d="M3 8h11" stroke="#555"/><path d="M3 2l11 12M14 2L3 14" stroke="#d8242c" stroke-width="2"/></svg></div>
    <div class="cell c-ic"><svg class="si" viewBox="0 0 16 16"><rect x="2" y="1" width="12" height="11" fill="#666" stroke="#222"/><rect x="5" y="3.500" width="6" height="6" fill="#dcdcc8"/><path d="M5 14h8M11 12l2 2-2 2" stroke="#d8242c" stroke-width="1.400" fill="none"/></svg></div>
    <div class="cell c-ic"><span class="plus">+</span></div>
    <div class="cell c-ls">LS: 1.00 PS: 1.00</div>
    <div class="cell c-unit">单位: 毫米</div>
    <div class="coords"><b>X =-0488.531</b> Y = 0870.196 Z =</div>
  </div>

  <footer class="taskbar">
    <div class="tb active"><svg class="tb-ic" viewBox="0 0 34 34"><circle cx="17" cy="17" r="15" fill="#7ca33a" stroke="#4f7426"/><path d="M9 7l7 19h3l6-19h-4l-3 12-5-12z" fill="#d4d8c8"/><circle cx="8" cy="8" r="3" fill="none" stroke="#c8dc98"/></svg></div>
    <div class="tb"><svg class="tb-ic" viewBox="0 0 34 34"><path d="M4 13L19 3l12 8-4 16-12 5z" fill="#dfe8ec"/><path d="M4 13l11 6v13L6 25z" fill="#c8dc70"/><path d="M15 19l14-7-3 15-11 5z" fill="#4aa85a"/><path d="M19 9l9 3-6 6z" fill="#9cd0e4"/><path d="M8 13l8-5h6l-8 5v4h5" stroke="#e8d060" fill="none" stroke-width="2.500"/></svg></div>
    <div class="tb"><svg class="tb-ic" viewBox="0 0 34 34"><ellipse cx="17" cy="17" rx="10" ry="14" fill="#15151a"/><ellipse cx="17" cy="23" rx="7" ry="8" fill="#fafafa"/><ellipse cx="13.500" cy="9" rx="2.400" ry="3" fill="#fff"/><ellipse cx="20.500" cy="9" rx="2.400" ry="3" fill="#fff"/><circle cx="14" cy="9.500" r="1.100" fill="#111"/><circle cx="20" cy="9.500" r="1.100" fill="#111"/><path d="M13 12.500h8l-4 3z" fill="#f0a818"/><path d="M7 16c6 3 14 3 20 0l-1 4-5 1 1 5-4-3-5 1 1-4c-4 0-7 0-7-4z" fill="#d8201c"/><ellipse cx="11" cy="31" rx="4" ry="2" fill="#f0b020"/><ellipse cx="23" cy="31" rx="4" ry="2" fill="#f0b020"/></svg></div>
    <div class="tray">
      <span class="ch">CH</span>
      <svg class="tr k" viewBox="0 0 16 16"><path d="M1 6h14v8H1z" fill="#aab4bc" stroke="#e0e6ea"/><path d="M3 8h10M3 10h10M5 12h6" stroke="#5a6a76"/><path d="M9 6c0-3 3-2 5-4" stroke="#aab4bc" fill="none"/></svg>
      <svg class="tr arrow" viewBox="0 0 10 10"><path d="M1 7l4-4 4 4z" fill="#f0f4f8"/></svg>
      <svg class="tr" viewBox="0 0 18 18"><path d="M3 1v16" stroke="#eee" stroke-width="1.500"/><path d="M4 2h10v8H4z" fill="#f4f4f4"/><circle cx="12" cy="13" r="4.500" fill="#d83030"/><path d="M10 11l4 4M14 11l-4 4" stroke="#fff"/></svg>
      <svg class="tr" viewBox="0 0 18 18"><rect x="1" y="1" width="16" height="16" fill="#2f7fd0"/><path d="M3 3h12L9 15z" fill="none" stroke="#fff" stroke-width="1.300"/><path d="M5 7c3 3 5-2 9 1" stroke="#fff" fill="none"/></svg>
      <svg class="tr t3" viewBox="0 0 18 18"><path d="M3 2h3v3h4V2h3l2 2v3H3z" fill="#ddd"/><path d="M4 7h9v7H9v3H7v-3H4z" fill="#f8f8f8" stroke="#223"/></svg>
      <svg class="tr" viewBox="0 0 18 18"><path d="M2 13h2v2H2zM6 10h2v5H6zM10 6h2v9h-2zM14 3h2v12h-2z" fill="#f4f6f8"/></svg>
      <svg class="tr t5" viewBox="0 0 18 18"><path d="M1 6h4l4-4v14l-4-4H1z" fill="#e8ecf0"/><path d="M11 6c1.500 1.500 1.500 4.500 0 6M13 4c3 3 3 7 0 10" stroke="#cdd5dc" fill="none"/></svg>
      <span class="clock">20</span>
    </div>
  </footer>
</div>
</body>
</html>
```
FILE: styles.css
```css
* { box-sizing: border-box; }
html, body { margin: 0; padding: 0; width: 1228px; height: 768px; overflow: hidden; }
body { font: 12px "Noto Sans CJK SC", "Liberation Sans", sans-serif; color: #222; }
.defs { position: absolute; }
.app { position: relative; display: flex; flex-direction: column; width: 1228px; height: 768px; overflow: hidden; }

.titlebar {
  height: 21px; flex: none; display: flex; align-items: flex-start; overflow: hidden;
  border-bottom: 1px solid #b4b8c8;
  background:
    radial-gradient(ellipse 60px 20px at 880px 14px, #3a2f80 0, transparent 100%),
    radial-gradient(ellipse 50px 16px at 1000px 12px, #3a3288 0, transparent 100%),
    radial-gradient(ellipse 50px 16px at 1070px 16px, #3c3080 0, transparent 100%),
    linear-gradient(90deg, #8f92a4 0, #8a8ca2 250px, #6a6a92 340px, #343a70 420px, #232a58 860px, #1a2850 1100px, #30404f 1228px);
}
.title { flex: none; width: 885px; margin-left: -2px; font: 12.500px/20px "Open Sans", "Noto Sans CJK SC", sans-serif; color: #15151f; white-space: nowrap; }
.title-box { flex: none; width: 297px; height: 1px; margin-left: 2px; background: #fff; }
.winbtn { flex: none; width: 27px; height: 17px; margin-left: 11px; border: 1px solid #a8b0b8; border-top: 0; border-radius: 0 0 0 3px; background: linear-gradient(#59606e, #2a3340); display: flex; align-items: center; justify-content: center; }
.winbtn i { width: 9px; height: 3px; background: #e8e8ee; }
.winbtn-next { margin-left: 2px; width: 8px; border-radius: 0; }

.menu { height: 20px; flex: none; display: flex; gap: 14px; padding-left: 1px; line-height: 20px; color: #252530; white-space: nowrap; background: linear-gradient(#fcfcfe, #dde0ec); border-bottom: 1px solid #a6a8b6; }
.menu span { flex: none; }

.share { position: absolute; left: 392px; top: 0; width: 446px; height: 32px; display: flex; align-items: center; padding: 0 0 3px 7px; background: linear-gradient(#4e94e6, #4a8cdc); border-top: 1px solid #1c4e9c; border-right: 1px solid #3a6cb0; border-bottom: 1px solid #3a6cb0; border-left: 1px solid #3a6cb0; color: #17263f; white-space: nowrap; }
.share span { flex: none; width: 48px; margin-right: 11px; }
.sh-ic { flex: none; width: 18px; height: 18px; margin-right: 3px; }
.sh-ic.first { margin-right: 12px; }

.toolbars { flex: none; height: 59px; display: flex; flex-direction: column; background: linear-gradient(#e6e8f2, #a8a9b5); }
.tbrow { display: flex; align-items: center; padding-left: 5px; }
.row-a { height: 31px; }
.row-b { height: 28px; padding-left: 4px; }
.ic { flex: none; width: 26px; height: 26px; }
.ictxt { font: bold 9px "Liberation Sans", sans-serif; fill: #111; }
.ictxt.blue { fill: #2f63b0; }
.ictxt.navy { fill: #1a2a80; }
.ictxt.red { fill: #c8242c; }
.sep { flex: none; width: 17px; height: 24px; background: radial-gradient(circle 1.500px at 8px 1.500px, #fff 60%, #888 100%, transparent 100%) 0 0 / 17px 4px repeat-y; }

.viewport { flex: none; height: 587px; }
.scene { display: block; width: 1228px; height: 587px; }
.axis { font: 11px "Liberation Sans", sans-serif; fill: #b8cce0; }

.status-a { flex: none; height: 20px; display: flex; align-items: flex-start; padding: 2px 0 0 748px; gap: 5px; background: linear-gradient(#e2e3ee, #c6c7d4); border-top: 1px solid #c8d2ea; box-shadow: inset 0 1px 0 #9a9aa5; white-space: nowrap; }
.search { flex: none; width: 130px; height: 17px; margin-right: -1px; background: #fff; border-radius: 2px; display: flex; justify-content: flex-end; align-items: center; padding-right: 1px; }
.mag { width: 14px; height: 14px; }
.sbtn { flex: none; height: 17px; line-height: 16px; border: 1px solid #b8b9c6; border-bottom: 0; padding-left: 5px; color: #333; overflow: hidden; }
.v1 { width: 108px; padding-left: 6px; word-spacing: 1.500px; }
.v2 { width: 59px; }
.v3 { width: 60px; font: bold 12px/16px "Liberation Sans", sans-serif; color: #222; }
.v4 { width: 24px; margin-left: -1px; }
.v5 { width: 35px; margin-left: 1px; padding: 2px; }
.v6 { width: 35px; padding: 2px; margin-left: -1px; }
.sbtn i { display: block; height: 12px; background: #4f6ea0; }

.status-b { flex: none; height: 21px; display: flex; align-items: center; padding-left: 580px; background: linear-gradient(#c7c8d3, #9c9ca8); border-top: 1px solid #8e8e98; border-bottom: 1px solid #141e2a; white-space: nowrap; color: #2a2a33; }
.cell { flex: none; height: 19px; line-height: 19px; border-left: 1px solid #aeaeba; display: flex; align-items: center; }
.c-text { width: 38px; padding-left: 6px; }
.c-ic { width: 28px; justify-content: center; }
.si { width: 15px; height: 15px; }
.plus { font: bold 13px "Liberation Sans", sans-serif; color: #111; }
.c-ls { width: 126px; padding-left: 9px; margin-left: -1px; font-family: "Open Sans", sans-serif; font-size: 12.300px; }
.c-unit { width: 69px; padding-left: 6px; font-family: "Open Sans", "Noto Sans CJK SC", sans-serif; }
.coords { flex: none; padding-left: 8px; font: 13px "Open Sans", sans-serif; }
.coords b { font-weight: 400; color: #d8303c; }

.taskbar {
  flex: 1; display: flex; gap: 4px; padding-top: 1px; overflow: hidden;
  background:
    radial-gradient(circle 330px at 700px 1000px, transparent 90%, rgba(255,255,255,.3) 94%, transparent 98%),
    linear-gradient(90deg, #4a8595 0, #3f7d97 300px, #2a6b95 600px, #1f5886 800px, #1a3d62 1000px, #122a45 1228px);
}
.tb { flex: none; width: 58px; height: 38px; border: 1px solid #8cb0c0; border-radius: 2px; display: flex; align-items: center; justify-content: center; background: linear-gradient(135deg, rgba(255,255,255,.28), rgba(255,255,255,.04) 60%, rgba(255,255,255,.12)); }
.tb.active { margin-left: -7px; background: linear-gradient(135deg, #8aa8b0, #dfe8e8); }
.tb-ic { width: 33px; height: 33px; }
.tray { flex: none; margin-left: auto; display: flex; align-items: center; height: 38px; color: #e8eef4; width: 209px; }
.tr { flex: none; width: 16px; height: 16px; margin-left: 9px; }
.tr.k { margin-left: 6px; }
.tr.arrow { width: 10px; height: 10px; margin-left: 10px; margin-right: 5px; }
.tr.t3 { margin-left: 6px; }
.tr.t5 { margin-left: 7px; }
.ch { flex: none; font: 11.500px "Liberation Mono", monospace; width: 14px; }
.clock { flex: none; font: 12px "Liberation Sans", sans-serif; margin: 21px 0 0 18px; }
```
